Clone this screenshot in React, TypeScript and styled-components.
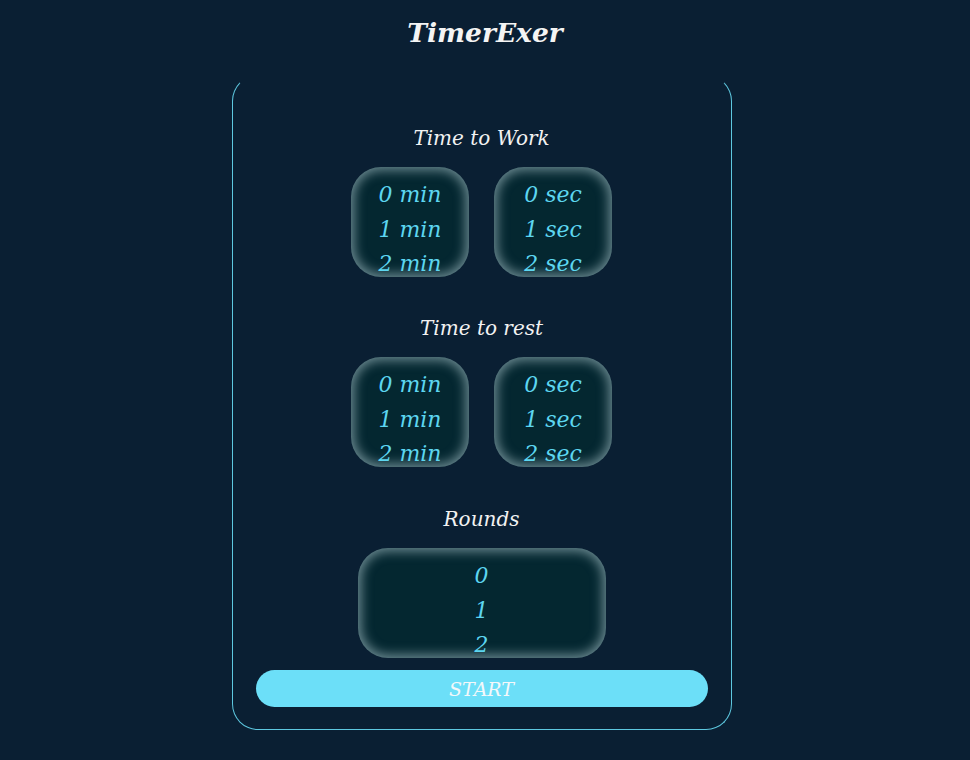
import React from "react"
import styled, { createGlobalStyle } from "styled-components"

const GlobalStyle = createGlobalStyle`
  html, body {
    margin: 0;
    padding: 0;
    background-color: #0a1f33;
  }
  body {
    font-family: "DejaVu Serif", "Liberation Serif", serif;
    font-style: italic;
  }
`

const Page = styled.div`
  width: 970px;
  min-height: 760px;
  display: flex;
  flex-direction: column;
  align-items: center;
  background-color: #0a1f33;
`

const Title = styled.h1`
  margin: 14px 0 0 0;
  font-size: 26.5px;
  font-weight: 700;
  font-style: italic;
  color: #f4f4f4;
  line-height: 38px;
`

const Card = styled.div`
  box-sizing: border-box;
  margin: 23px 7px 0 0;
  width: 500px;
  height: 655px;
  border: 1px solid #5ec8e0;
  border-top-color: transparent;
  border-radius: 26px;
  display: flex;
  flex-direction: column;
  align-items: center;
  padding-top: 49px;
`

const Section = styled.div`
  display: flex;
  flex-direction: column;
  align-items: center;
  margin-bottom: ${props => props.$gap ?? 40}px;
`

const Label = styled.div`
  font-size: 20px;
  color: #f2f2f2;
  line-height: 26px;
  margin-bottom: 16px;
`

const Row = styled.div`
  display: flex;
  gap: 25px;
`

const Picker = styled.div`
  box-sizing: border-box;
  flex-shrink: 0;
  width: ${props => props.$width || 118}px;
  height: 110px;
  border-radius: 30px;
  background-color: #042730;
  box-shadow: inset 0 0 12px 3px rgba(190, 215, 220, 0.58);
  overflow: hidden;
  padding-top: 11px;
  display: flex;
  flex-direction: column;
  align-items: center;
`

const Item = styled.div`
  font-size: 22px;
  line-height: 34.5px;
  color: #5dd6f0;
  text-align: center;
  white-space: nowrap;
`

const StartButton = styled.button`
  flex-shrink: 0;
  margin-top: 12px;
  width: 452px;
  height: 37px;
  border: none;
  border-radius: 19px;
  background-color: #6cdff8;
  color: #f4f8fa;
  font-family: "DejaVu Serif", "Liberation Serif", serif;
  font-style: italic;
  font-size: 19px;
  cursor: pointer;
`

const values = [0, 1, 2]

const Wheel = ({ unit, width } : { unit ?: string, width ?: number }) => (
  <Picker $width={width}>
    {values.map(v => (
      <Item key={v}>{unit ? `${v} ${unit}` : v}</Item>
    ))}
  </Picker>
)

const App = () => {
  return (
    <Page>
      <GlobalStyle />
      <Title>TimerExer</Title>
      <Card>
        <Section $gap={38}>
          <Label>Time to Work</Label>
          <Row>
            <Wheel unit="min" />
            <Wheel unit="sec" />
          </Row>
        </Section>
        <Section $gap={39}>
          <Label>Time to rest</Label>
          <Row>
            <Wheel unit="min" />
            <Wheel unit="sec" />
          </Row>
        </Section>
        <Section $gap={0}>
          <Label>Rounds</Label>
          <Wheel width={248} />
        </Section>
        <StartButton>START</StartButton>
      </Card>
    </Page>
  )
}

export default App
